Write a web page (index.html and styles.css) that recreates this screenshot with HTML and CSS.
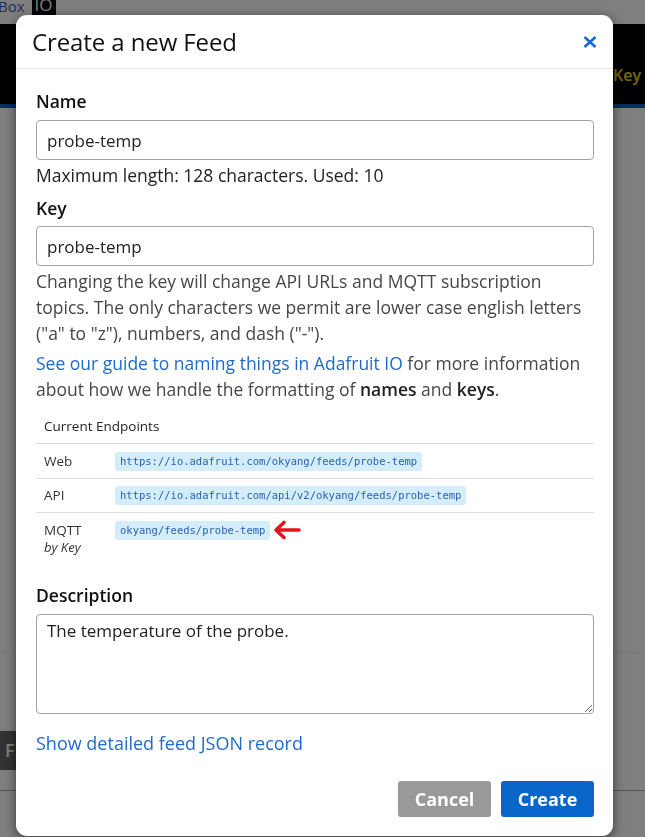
FILE: index.html
```html
<!DOCTYPE html>
<html lang="en">
<head>
<meta charset="utf-8">
<title>Create a new Feed</title>
<link rel="stylesheet" href="styles.css">
</head>
<body>
<div class="page">
  <nav class="topnav">
    <span class="nav-link">Box</span>
    <span class="nav-io">IO</span>
  </nav>
  <header class="site-header">
    <span class="site-key">Key</span>
  </header>
  <div class="accent"></div>
  <section class="panel"></section>
  <div class="toolbar"><span class="tool-btn">F</span></div>
  <div class="bottom-line"></div>
</div>
<div class="overlay"></div>

<div class="modal" role="dialog">
  <div class="modal-header">
    <h2 class="modal-title">Create a new Feed</h2>
    <button class="close" aria-label="Close">
      <svg width="14" height="12" viewBox="0 0 14 12"><path d="M1.5 1 L12.5 11 M12.5 1 L1.5 11" stroke="#1768d2" stroke-width="2.6" fill="none"/></svg>
    </button>
  </div>
  <div class="modal-body">
    <label class="field-label">Name</label>
    <input class="text-input" type="text" value="probe-temp">
    <p class="hint">Maximum length: 128 characters. Used: 10</p>

    <label class="field-label key-label">Key</label>
    <input class="text-input key-input" type="text" value="probe-temp">
    <p class="help">Changing the key will change API URLs and MQTT subscription topics. The only characters we permit are lower case english letters ("a" to "z"), numbers, and dash ("-").</p>
    <p class="help help-link"><a href="#" class="link">See our guide to naming things in Adafruit IO</a> for more information about how we handle the formatting of <b>names</b> and <b>keys</b>.</p>

    <table class="endpoints">
      <thead>
        <tr><th colspan="2">Current Endpoints</th></tr>
      </thead>
      <tbody>
        <tr class="row-web"><td class="ep-name">Web</td><td><code class="badge">https://io.adafruit.com/okyang/feeds/probe-temp</code></td></tr>
        <tr><td class="ep-name">API</td><td><code class="badge">https://io.adafruit.com/api/v2/okyang/feeds/probe-temp</code></td></tr>
        <tr class="row-mqtt"><td class="ep-name">MQTT<br><i>by Key</i></td><td><code class="badge">okyang/feeds/probe-temp</code><svg class="arrow" width="28" height="22" viewBox="0 0 28 22"><path d="M11 3.5 L3 11 L11 18.5 M3 11 H26" stroke="#e3141b" stroke-width="3.6" stroke-linecap="round" stroke-linejoin="round" fill="none"/></svg></td></tr>
      </tbody>
    </table>

    <label class="field-label desc-label">Description</label>
    <textarea class="text-area">The temperature of the probe.</textarea>

    <a href="#" class="link json-link">Show detailed feed JSON record</a>
  </div>
  <div class="modal-footer">
    <button class="btn btn-cancel">Cancel</button>
    <button class="btn btn-create">Create</button>
  </div>
</div>
</body>
</html>
```

FILE: styles.css
```css
html, body {
  margin: 0;
  padding: 0;
  height: 100%;
  overflow: hidden;
}
body {
  font-family: "Open Sans", "Liberation Sans", sans-serif;
  background: #ffffff;
  color: #222;
}

/* background page */
.page {
  display: flex;
  flex-direction: column;
}
.topnav {
  height: 24px;
  display: flex;
  align-items: flex-start;
  gap: 7px;
}
.nav-link {
  font-size: 15px;
  line-height: 12px;
  color: #2f66c6;
  margin-left: -2px;
}
.nav-io {
  background: #000;
  color: #fff;
  font-size: 17px;
  line-height: 10px;
  height: 15px;
  width: 24px;
  text-align: center;
  overflow: hidden;
}
.site-header {
  height: 80px;
  background: #000;
  display: flex;
  justify-content: flex-end;
  align-items: flex-start;
}
.site-key {
  color: #f0d21a;
  font-size: 16px;
  font-weight: 600;
  line-height: 22px;
  margin-top: 40px;
  margin-right: 4px;
}
.accent {
  height: 4px;
  background: #0a5ec4;
}
.panel {
  height: 544px;
  border-bottom: 1px solid #f2f2f2;
}
.toolbar {
  margin-top: 78px;
  height: 39px;
  display: flex;
}
.tool-btn {
  background: #666;
  color: #fff;
  width: 40px;
  font-size: 18px;
  font-weight: 600;
  line-height: 39px;
  padding-left: 5px;
  box-sizing: border-box;
}
.bottom-line {
  margin-top: 20px;
  border-top: 1px solid #a8a8a8;
}

.overlay {
  position: fixed;
  inset: 0;
  background: rgba(0, 0, 0, 0.5);
}

/* modal */
.modal {
  position: absolute;
  top: 15px;
  left: 16px;
  width: 597px;
  background: #fff;
  border-radius: 11px;
  box-shadow: 0 3px 12px rgba(0, 0, 0, 0.55);
  box-sizing: border-box;
}
.modal-header {
  height: 54px;
  box-sizing: border-box;
  border-bottom: 1px solid #e4e4e4;
  display: flex;
  align-items: center;
  justify-content: space-between;
  padding: 0 16px 0 16px;
}
.modal-title {
  margin: 0;
  font-size: 24px;
  font-weight: 400;
  color: #111;
  line-height: 30px;
  letter-spacing: -0.1px;
}
.close {
  border: 0;
  background: none;
  padding: 0;
  display: flex;
  margin-top: 1px;
}

.modal-body {
  padding: 20px 19px 26px 20px;
  display: flex;
  flex-direction: column;
  align-items: stretch;
}
.field-label {
  font-size: 17.5px;
  font-weight: 600;
  color: #111;
  line-height: 24px;
}
.key-label {
  margin-top: 9px;
}
.desc-label {
  margin-top: 20px;
}
.text-input {
  margin-top: 7px;
  height: 40px;
  box-sizing: border-box;
  border: 1px solid #a3a3a3;
  border-radius: 4px;
  padding: 0 10px;
  font-family: "Open Sans", "Liberation Sans", sans-serif;
  font-size: 17px;
  color: #222;
  background: #fff;
}
.key-input {
  margin-top: 6px;
}
.hint {
  margin: 3px 0 0;
  font-size: 17.5px;
  line-height: 24px;
  color: #222;
}
.help {
  margin: 2px 0 0;
  font-size: 17.5px;
  line-height: 26px;
  color: #474747;
}
.help b {
  font-weight: 600;
  color: #222;
}
.help-link {
  margin-top: 4px;
}
.link {
  color: #1f6acb;
  text-decoration: none;
}

.endpoints {
  margin-top: 6px;
  border-collapse: collapse;
  width: 100%;
  font-size: 13.5px;
  color: #333;
}
.endpoints th {
  text-align: left;
  font-weight: 400;
  padding: 8px 8px 7px;
  line-height: 20px;
  color: #222;
}
.endpoints td {
  border-top: 1px solid #dedede;
  padding: 7px 8px 7px;
  vertical-align: top;
  line-height: 19px;
}
.endpoints .row-web td {
  padding-top: 8px;
}
.endpoints td.ep-name {
  width: 55px;
}
.endpoints .row-mqtt td {
  padding-top: 8px;
}
.endpoints .row-mqtt td.ep-name {
  line-height: 17px;
  padding-top: 9px;
}
.endpoints i {
  font-size: 13px;
}
.badge {
  display: inline-block;
  vertical-align: top;
  background: #d3edfa;
  color: #2c60b3;
  font-family: "DejaVu Sans Mono", "Liberation Mono", monospace;
  font-size: 10.5px;
  line-height: 19px;
  padding: 0 5px;
  border-radius: 3px;
}
.arrow {
  vertical-align: top;
  margin-left: 3px;
  margin-top: -2px;
}

.text-area {
  margin-top: 7px;
  height: 100px;
  box-sizing: border-box;
  border: 1px solid #a3a3a3;
  border-radius: 4px;
  padding: 4px 10px;
  font-family: "Open Sans", "Liberation Sans", sans-serif;
  font-size: 17px;
  line-height: 24px;
  color: #222;
  resize: vertical;
}
.json-link {
  margin-top: 17px;
  font-size: 18px;
  line-height: 24px;
  align-self: flex-start;
}

.modal-footer {
  display: flex;
  justify-content: flex-end;
  gap: 10px;
  padding: 0 19px 19px 20px;
}
.btn {
  height: 36px;
  width: 93px;
  border: 0;
  border-radius: 3px;
  color: #fff;
  font-family: "Open Sans", "Liberation Sans", sans-serif;
  font-size: 18px;
  font-weight: 700;
  padding: 0;
}
.btn-cancel {
  background: #999;
}
.btn-create {
  background: #0866cb;
}
```
